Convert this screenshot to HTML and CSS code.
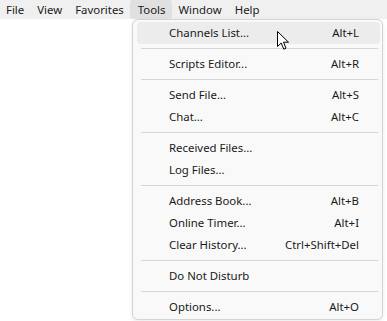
FILE: index.html
```html
<!DOCTYPE html>
<html lang="en">
<head>
    <meta charset="UTF-8">
    <meta name="viewport" content="width=device-width, initial-scale=1.0">
    <title>Tools Menu</title>
    <link rel="stylesheet" href="styles.css">
</head>
<body>
    <div class="menubar">
        <span class="menu-title">File</span>
        <span class="menu-title">View</span>
        <span class="menu-title">Favorites</span>
        <span class="menu-title open">Tools</span>
        <span class="menu-title">Window</span>
        <span class="menu-title">Help</span>
    </div>

    <div class="workspace">
        <div class="popup">
            <div class="item hover"><span class="label">Channels List...</span><span class="key">Alt+L</span></div>
            <div class="sep"></div>
            <div class="item"><span class="label">Scripts Editor...</span><span class="key">Alt+R</span></div>
            <div class="sep"></div>
            <div class="item"><span class="label">Send File...</span><span class="key">Alt+S</span></div>
            <div class="item"><span class="label">Chat...</span><span class="key">Alt+C</span></div>
            <div class="sep"></div>
            <div class="item"><span class="label">Received Files...</span></div>
            <div class="item"><span class="label">Log Files...</span></div>
            <div class="sep"></div>
            <div class="item"><span class="label">Address Book...</span><span class="key">Alt+B</span></div>
            <div class="item"><span class="label">Online Timer...</span><span class="key">Alt+I</span></div>
            <div class="item"><span class="label">Clear History...</span><span class="key">Ctrl+Shift+Del</span></div>
            <div class="sep"></div>
            <div class="item"><span class="label">Do Not Disturb</span></div>
            <div class="sep"></div>
            <div class="item"><span class="label">Options...</span><span class="key">Alt+O</span></div>

            <!-- mouse pointer over the hovered item -->
            <svg class="cursor" width="13" height="20" viewBox="0 0 13 20">
                <path d="M0.5 0.5 L0.5 15.5 L4.2 12 L6.8 18.2 L9 17.2 L6.5 11.2 L11.5 11.2 Z" fill="#fff" stroke="#000" stroke-width="1" stroke-linejoin="round"/>
            </svg>
        </div>
    </div>
</body>
</html>
```

FILE: styles.css
```css
body {
    margin: 0;
    font-family: "Noto Sans", "Open Sans", sans-serif;
    font-size: 11.4px;
    color: #1a1a1a;
    background: #fff;
    width: 387px;
    height: 321px;
    overflow: hidden;
}
.menubar {
    display: flex;
    height: 19px;
    padding-left: 0;
    background: #f0f0f0;
    align-items: stretch;
}
.menu-title {
    display: flex;
    align-items: center;
    padding: 0 6.5px 1px 6.5px;
    border-radius: 3px;
}
.menu-title:first-child {
    padding-left: 6px;
}
.menu-title.open {
    padding-left: 7.5px;
    background: #e0e0e0;
}
.workspace {
    display: flex;
    padding-left: 132px;
}
.popup {
    position: relative;
    width: 249px;
    padding: 2px 0 1px 0;
    background: #f9f9f9;
    border: 1px solid #d4d4d4;
    border-radius: 6px;
    box-shadow: 0 2px 4px rgba(0, 0, 0, 0.08);
}
.item {
    display: flex;
    align-items: center;
    box-sizing: border-box;
    height: 22px;
    margin: 0 2px 0 4px;
    padding: 0 21px 1px 32px;
    border-radius: 4px;
}
.item.hover {
    background: #ececec;
}
.label {
    flex: 1;
}
.key {
    text-align: right;
}
.sep {
    height: 1px;
    margin: 4px 4px 4px 8px;
    background: #d6d6d6;
}
.cursor {
    position: absolute;
    left: 144px;
    top: 11px;
}
```
